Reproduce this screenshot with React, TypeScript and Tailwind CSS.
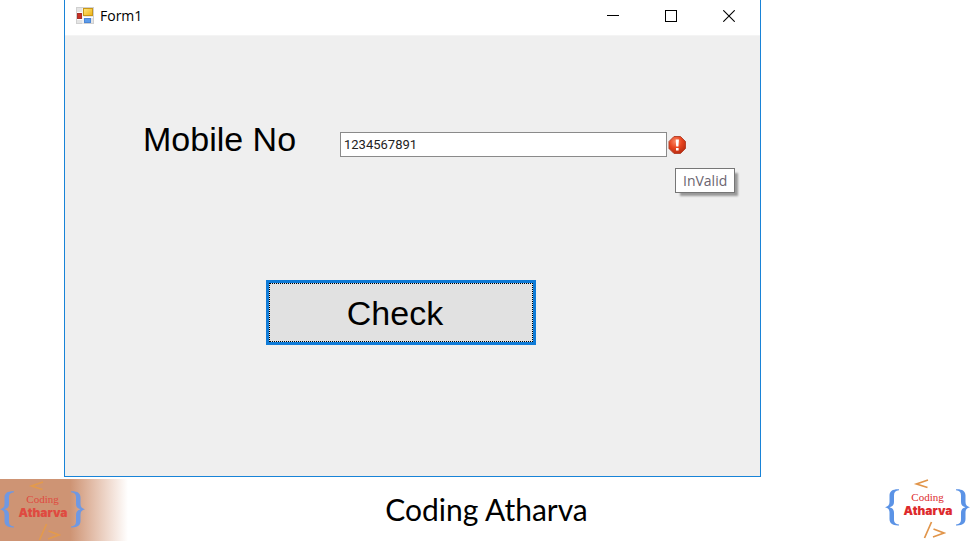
import React, { useState } from "react";

const openSans = "font-['Open_Sans',sans-serif]";
const arial = "font-['Liberation_Sans',Arial,sans-serif]";

function FormIcon() {
  return (
    <svg width="18" height="18" viewBox="0 0 18 18" aria-hidden="true">
      <defs>
        <linearGradient id="gold" x1="0" y1="0" x2="1" y2="1">
          <stop offset="0" stopColor="#ffe680" />
          <stop offset="1" stopColor="#eeb211" />
        </linearGradient>
      </defs>
      <rect x="0.5" y="0.5" width="17" height="16" fill="#e4e4e4" stroke="#d0d0d0" />
      <path d="M7 1v16M1 5.500h5M1 12.500h6M7 10.500h10" stroke="#fff" />
      <rect x="1.500" y="6.500" width="4" height="5" fill="#c93025" stroke="#a8302a" />
      <rect x="7.500" y="1.500" width="9" height="7" fill="url(#gold)" stroke="#c99718" />
      <rect x="8.500" y="11.500" width="6" height="4" fill="#5b9bea" stroke="#4b86d6" />
    </svg>
  );
}

function CaptionButtons() {
  const cls = "flex h-8 w-[58px] items-center justify-center";
  return (
    <div className="flex pr-[2px]">
      <button type="button" aria-label="Minimize" className={cls}>
        <svg width="12" height="12" viewBox="0 0 12 12" shapeRendering="crispEdges">
          <path d="M0 5.500h12" stroke="#000" />
        </svg>
      </button>
      <button type="button" aria-label="Maximize" className={cls}>
        <svg width="12" height="12" viewBox="0 0 12 12" shapeRendering="crispEdges">
          <rect x="0.500" y="0.500" width="11" height="11" fill="none" stroke="#000" />
        </svg>
      </button>
      <button type="button" aria-label="Close" className={cls}>
        <svg width="12" height="12" viewBox="0 0 12 12">
          <path d="M0.300 0.300l11.400 11.400M11.700 0.300L0.300 11.700" stroke="#000" strokeWidth="1.100" />
        </svg>
      </button>
    </div>
  );
}

function ErrorIcon() {
  return (
    <svg width="20" height="20" viewBox="0 0 20 20" role="img" aria-label="Error">
      <defs>
        <radialGradient id="err" cx="0.4" cy="0.3" r="0.75">
          <stop offset="0" stopColor="#f98a68" />
          <stop offset="0.5" stopColor="#e8451f" />
          <stop offset="1" stopColor="#b52a10" />
        </radialGradient>
      </defs>
      <path d="M7 1.500h6.500l5 5v7l-5 5H7l-5-5v-7z" fill="url(#err)" stroke="#b5452f" strokeLinejoin="round" />
      <path d="M8.700 4.500h3.200l-.5 7H9.200z" fill="#fff" />
      <rect x="9" y="13" width="2.600" height="2.500" fill="#fff" />
    </svg>
  );
}

const brace =
  "M14 12.300C8 12 4.500 14 4.500 18.500V25c0 3-1.500 4.600-4.500 5.200 3 .6 4.500 2.300 4.500 5.300V42c0 4.700 3.500 6.700 9.500 6.400v-1c-3.500-.2-5-1.800-5-5.200v-6.500c0-3-1.500-4.800-4.500-5.500 3-.7 4.500-2.400 4.500-5.300v-6.500c0-3.300 1.500-4.900 5-5.100z";

function Logo({ faded = false }: { faded?: boolean }) {
  const blue = faded ? "#6f98e2" : "#5b93e6";
  const red = faded ? "#df4a40" : "#dd2a2c";
  const orange = faded ? "#e39a4c" : "#e1954a";
  return (
    <svg width="85" height="62" viewBox="0 0 85 62" role="img" aria-label="Coding Atharva">
      <g fill={blue}>
        <path d={brace} />
        <path transform="translate(85 0) scale(-1 1)" d={brace} />
      </g>
      <path d="M43 3L31.500 7 42.500 10.500M46.500 45L39.500 61M48.500 52L59 56 48 60" fill="none" stroke={orange} strokeWidth="1.700" />
      <text x="42.500" y="24" textAnchor="middle" fontSize="11" fill={red} className="font-['Liberation_Serif',serif]">Coding</text>
      <text x="43" y="38" textAnchor="middle" fontSize="12" fontWeight="900" fill={red} className="font-['Inter',sans-serif]">Atharva</text>
    </svg>
  );
}

export default function App() {
  const [mobile, setMobile] = useState("1234567891");
  return (
    <div className="bg-white text-black">
      <main className="ml-16 mr-[209px] border border-t-0 border-[#1883d7] bg-[#efefef]">
        <header className="flex h-9 items-start justify-between border-b border-[#f4f4f4] bg-white pl-[11px]">
          <div className="flex h-8 items-center gap-[6px]">
            <FormIcon />
            <h1 className={`${openSans} text-[14px] leading-5`}>Form1</h1>
          </div>
          <CaptionButtons />
        </header>
        <form onSubmit={(e) => e.preventDefault()} className="pb-[131px] pt-[83px]">
          <div className="flex items-start pl-[78px] pr-[73px]">
            <label htmlFor="mobile" className={`${arial} w-[197px] shrink-0 whitespace-nowrap text-[34px] leading-10`}>
              Mobile No
            </label>
            <input
              id="mobile"
              value={mobile}
              onChange={(e) => setMobile(e.target.value)}
              className="mt-[13px] h-[25px] min-w-0 flex-1 border border-[#8a8a8a] bg-white px-[3px] font-['Roboto',sans-serif] text-[13px] leading-5 text-[#222] outline-none"
            />
            <div className="relative mt-4 h-5 w-5">
              <ErrorIcon />
              <div role="tooltip" className={`${openSans} absolute left-2 top-[33px] border border-[#767676] bg-white px-[7px] text-[14px] leading-[23px] text-[#6b6470] shadow-[4px_4px_2px_-1px_#999]`}>
                InValid
              </div>
            </div>
          </div>
          <div className="flex justify-center pr-[23px] pt-[121px]">
            <button type="submit" className={`${arial} h-[65px] w-[270px] border-[3px] border-[#0f7bd7] bg-[#e1e1e1] text-[34px] leading-10`}>
              <span className="flex h-full items-center justify-center border border-dotted border-black pr-3">Check</span>
            </button>
          </div>
        </form>
      </main>
      <footer className="mt-[2px] flex h-[62px] items-start justify-between">
        <div className="w-32 bg-linear-to-r from-[#ce9474] from-55% to-white">
          <Logo faded />
        </div>
        <p className="pl-[3px] pt-[10px] font-['Lato',sans-serif] text-[30px] leading-10">Coding Atharva</p>
        <div className="-mt-[2px] flex w-32 justify-end">
          <Logo />
        </div>
      </footer>
    </div>
  );
}
